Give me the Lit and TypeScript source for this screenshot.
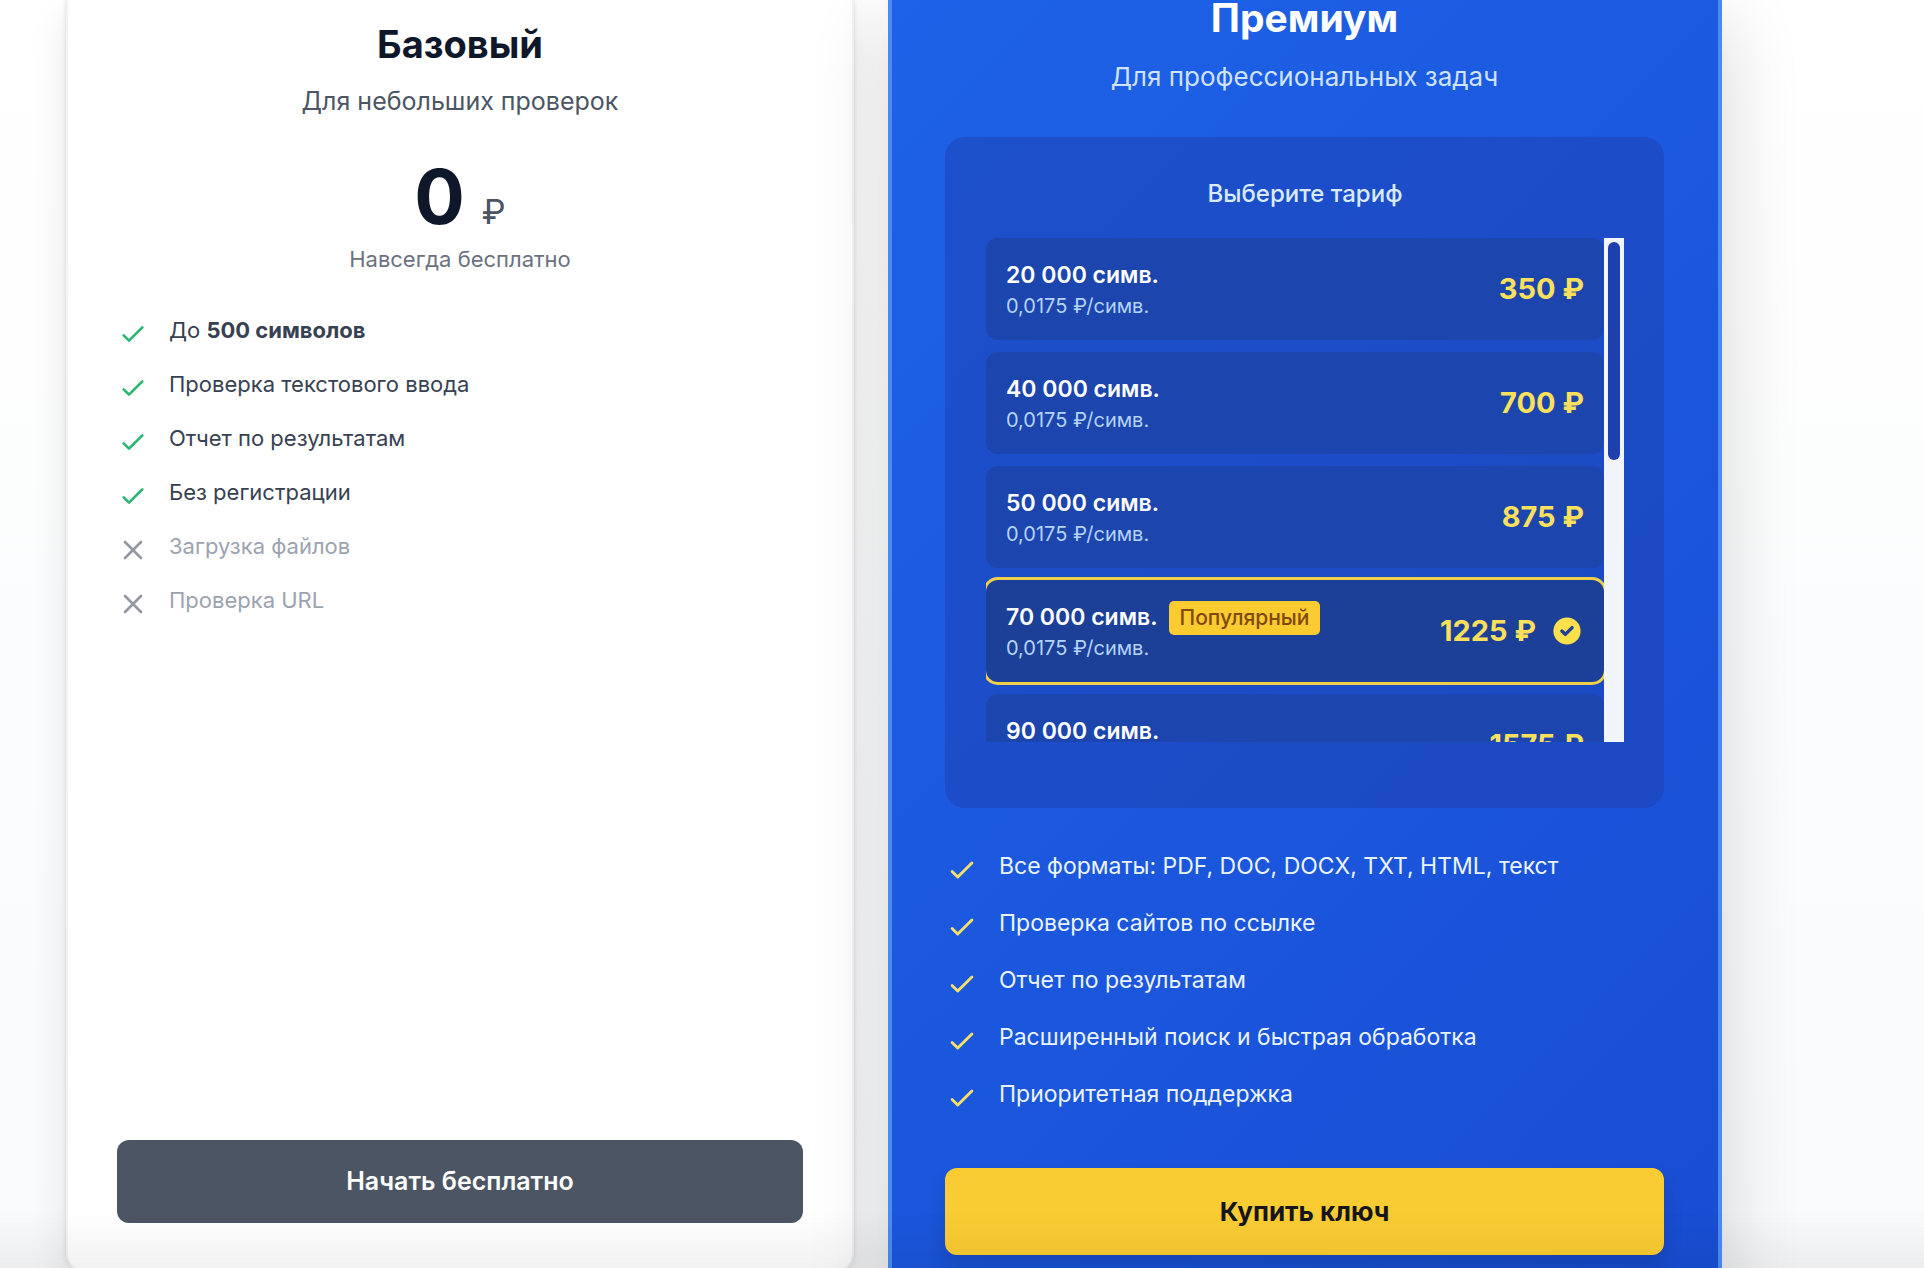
import { LitElement, html, css, svg, nothing } from "lit";
import { customElement, state } from "lit/decorators.js";

interface Feature {
  text: string;
  strong?: string;
  off?: boolean;
}

interface Tariff {
  volume: string;
  rate: string;
  price: string;
  popular?: boolean;
}

const BASIC: Feature[] = [
  { text: "До ", strong: "500 символов" },
  { text: "Проверка текстового ввода" },
  { text: "Отчет по результатам" },
  { text: "Без регистрации" },
  { text: "Загрузка файлов", off: true },
  { text: "Проверка URL", off: true },
];

const PREMIUM: Feature[] = [
  { text: "Все форматы: PDF, DOC, DOCX, TXT, HTML, текст" },
  { text: "Проверка сайтов по ссылке" },
  { text: "Отчет по результатам" },
  { text: "Расширенный поиск и быстрая обработка" },
  { text: "Приоритетная поддержка" },
];

const TARIFFS: Tariff[] = [
  { volume: "20 000 симв.", rate: "0,0175 ₽/симв.", price: "350 ₽" },
  { volume: "40 000 симв.", rate: "0,0175 ₽/симв.", price: "700 ₽" },
  { volume: "50 000 симв.", rate: "0,0175 ₽/симв.", price: "875 ₽" },
  { volume: "70 000 симв.", rate: "0,0175 ₽/симв.", price: "1225 ₽", popular: true },
  { volume: "90 000 симв.", rate: "0,0175 ₽/симв.", price: "1575 ₽" },
];

const checkPath = svg`<path d="M5 13l4 4L19 7"></path>`;
const crossPath = svg`<path d="M6 18L18 6M6 6l12 12"></path>`;

@customElement("app-root")
export class AppRoot extends LitElement {
  @state() private selected = 3;

  static styles = css`
    :host {
      display: block;
      max-height: 100vh;
      overflow: hidden;
      background: linear-gradient(#ffffff, #f9fafc);
      color: #0f172a;
      font-family: "Inter", "Liberation Sans", sans-serif;
    }
    * {
      box-sizing: border-box;
    }
    h2,
    p,
    ul {
      margin: 0;
      padding: 0;
    }
    ul {
      list-style: none;
    }
    button {
      border: 0;
      font-family: inherit;
      cursor: pointer;
    }
    .plans {
      display: grid;
      grid-template-columns: 788fr 834fr;
      column-gap: 34px;
      padding: 0 202px 0 66px;
    }
    .card {
      display: flex;
      flex-direction: column;
      text-align: center;
    }
    .basic {
      margin-bottom: 40px;
      padding: 20px 49px 48px;
      border: 2px solid #f3f3f5;
      border-top: 0;
      border-radius: 0 0 20px 20px;
      background: #ffffff;
      box-shadow: 0 16px 40px rgba(0, 0, 0, 0.09), 0 0 5px rgba(0, 0, 0, 0.12);
    }
    .premium {
      position: relative;
      padding: 0 54px 54px 53px;
      border: solid #4a8bf3;
      border-width: 0 4px 4px;
      border-radius: 0 0 24px 24px;
      background: linear-gradient(135deg, #1d62e8, #194dd3);
      box-shadow: 0 20px 80px rgba(0, 0, 0, 0.16);
      color: #ffffff;
    }
    .title {
      font-weight: 700;
    }
    .basic .title {
      font-size: 38px;
      line-height: 48px;
    }
    .premium .title {
      font-size: 39px;
      line-height: 36px;
    }
    .lead {
      color: #4b5563;
      font-size: 25px;
      line-height: 40px;
      margin-top: 13px;
    }
    .premium .lead {
      color: #cfe3fd;
      font-size: 26px;
      margin-top: 21px;
    }
    .amount {
      display: flex;
      justify-content: center;
      align-items: baseline;
      gap: 17px;
      margin-top: 38px;
      font-size: 75px;
      font-weight: 700;
      line-height: 75px;
    }
    .currency {
      color: #4b5563;
      font-size: 34px;
      font-weight: 400;
      line-height: 36px;
    }
    .note {
      margin-top: 8px;
      color: #6b7280;
      font-size: 22px;
      line-height: 34px;
    }
    .features {
      display: flex;
      flex-direction: column;
      text-align: left;
    }
    .basic .features {
      gap: 20px;
      margin-top: 37px;
      color: #374151;
      font-size: 22px;
      line-height: 34px;
    }
    .premium .features {
      gap: 21px;
      margin-top: 40px;
      color: #eaf4ff;
      font-size: 23px;
      line-height: 36px;
    }
    .feature {
      display: flex;
      align-items: flex-start;
      gap: 20px;
    }
    .icon {
      flex: none;
      width: 32px;
      height: 32px;
      margin: 5px 0 -5px;
      fill: none;
      stroke: #2bb673;
      stroke-width: 2;
      stroke-linecap: round;
      stroke-linejoin: round;
    }
    .premium .icon {
      width: 34px;
      height: 34px;
      stroke: #f7e06a;
    }
    .off {
      color: #9ca3af;
    }
    .off .icon {
      stroke: #9498a3;
    }
    .action {
      border-radius: 12px;
      text-align: center;
    }
    .basic .action {
      margin-top: auto;
      padding: 22px;
      background: #4b5563;
      color: #ffffff;
      font-size: 25px;
      font-weight: 600;
      line-height: 39px;
    }
    .premium .action {
      margin-top: 56px;
      padding: 23px;
      background: #facc33;
      box-shadow: 0 12px 20px rgba(0, 0, 0, 0.12);
      color: #14161c;
      font-size: 26px;
      font-weight: 700;
      line-height: 41px;
    }
    .panel {
      margin-top: 40px;
      padding: 40px 40px 66px 41px;
      border-radius: 20px;
      background: rgba(30, 64, 175, 0.5);
    }
    .caption {
      color: #d9eafe;
      font-size: 24px;
      font-weight: 500;
      line-height: 34px;
    }
    .scroller {
      display: flex;
      height: 504px;
      margin-top: 27px;
    }
    .tariffs {
      flex: 1;
      display: flex;
      flex-direction: column;
      gap: 12px;
      overflow-y: auto;
      scrollbar-width: none;
    }
    .tariff {
      flex: none;
      display: flex;
      justify-content: space-between;
      align-items: center;
      width: 100%;
      padding: 20px;
      border-radius: 12px;
      background: #1c45ad;
      color: #ffffff;
      text-align: left;
    }
    .tariff.chosen {
      background: #1c3f98;
      box-shadow: 0 0 0 3px #f0cf4c;
    }
    .volume {
      display: flex;
      align-items: center;
      gap: 11px;
      font-size: 23px;
      font-weight: 600;
      line-height: 35px;
    }
    .rate {
      display: block;
      color: #b4d4fc;
      font-size: 20px;
      line-height: 27px;
    }
    .badge {
      padding: 0 11px;
      border-radius: 5px;
      background: #fbcb30;
      color: #80490f;
      font-size: 21px;
      font-weight: 500;
      line-height: 34px;
    }
    .price {
      display: flex;
      align-items: center;
      gap: 14px;
      color: #fbe05c;
      font-size: 29px;
      font-weight: 700;
      line-height: 40px;
    }
    .mark {
      width: 34px;
      height: 34px;
      fill: #fde04b;
    }
    .track {
      flex: none;
      width: 20px;
      padding: 4px;
      background: #f1f5f9;
    }
    .thumb {
      height: 44%;
      border-radius: 6px;
      background: #1e40af;
    }
    .fade {
      position: fixed;
      inset: auto 0 0;
      height: 56px;
      background: linear-gradient(transparent, rgba(0, 0, 0, 0.05));
      pointer-events: none;
    }
  `;

  private features(items: Feature[]) {
    return html`<ul class="features">
      ${items.map(
        (f) => html`<li class="feature ${f.off ? "off" : ""}">
          <svg class="icon" viewBox="0 0 24 24" aria-hidden="true">
            ${f.off ? crossPath : checkPath}
          </svg>
          <span>${f.text}${f.strong ? html`<strong>${f.strong}</strong>` : nothing}</span>
        </li>`,
      )}
    </ul>`;
  }

  private tariff(t: Tariff, index: number) {
    const chosen = index === this.selected;
    return html`<button
      type="button"
      class="tariff ${chosen ? "chosen" : ""}"
      aria-pressed=${chosen}
      @click=${() => (this.selected = index)}
    >
      <span>
        <span class="volume">
          ${t.volume}${t.popular ? html`<span class="badge">Популярный</span>` : nothing}
        </span>
        <span class="rate">${t.rate}</span>
      </span>
      <span class="price">
        ${t.price}
        ${chosen
          ? html`<svg class="mark" viewBox="0 0 20 20" aria-hidden="true">
              <path
                fill-rule="evenodd"
                clip-rule="evenodd"
                d="M10 18a8 8 0 100-16 8 8 0 000 16zm3.707-9.293a1 1 0 00-1.414-1.414L9 10.586 7.707 9.293a1 1 0 00-1.414 1.414l2 2a1 1 0 001.414 0l4-4z"
              ></path>
            </svg>`
          : nothing}
      </span>
    </button>`;
  }

  render() {
    return html`
      <main class="plans">
        <section class="card basic">
          <h2 class="title">Базовый</h2>
          <p class="lead">Для небольших проверок</p>
          <p class="amount">0 <span class="currency">₽</span></p>
          <p class="note">Навсегда бесплатно</p>
          ${this.features(BASIC)}
          <button type="button" class="action">Начать бесплатно</button>
        </section>
        <section class="card premium">
          <h2 class="title">Премиум</h2>
          <p class="lead">Для профессиональных задач</p>
          <div class="panel">
            <p class="caption">Выберите тариф</p>
            <div class="scroller">
              <div class="tariffs">${TARIFFS.map((t, i) => this.tariff(t, i))}</div>
              <div class="track"><div class="thumb"></div></div>
            </div>
          </div>
          ${this.features(PREMIUM)}
          <button type="button" class="action">Купить ключ</button>
        </section>
      </main>
      <div class="fade"></div>
    `;
  }
}
